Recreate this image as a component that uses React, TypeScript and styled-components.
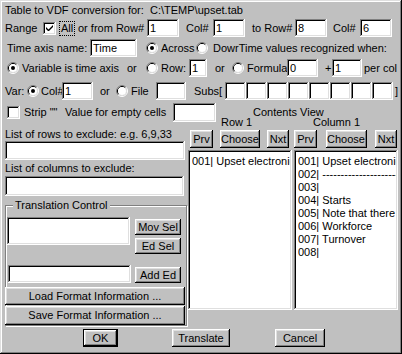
import React from 'react';
import styled, { createGlobalStyle } from 'styled-components';

const GlobalStyle = createGlobalStyle`
  html, body {
    margin: 0;
    padding: 0;
    background: #c0c0c0;
  }
  body {
    font-family: "Liberation Sans", Arial, sans-serif;
    font-size: 11px;
    color: #000;
  }
`;

const sunken = `
  box-shadow: inset -1px -1px #fff, inset 1px 1px #808080, inset -2px -2px #dfdfdf, inset 2px 2px #000;
`;

const raised = `
  box-shadow: inset -1px -1px #000, inset 1px 1px #fff, inset -2px -2px #808080, inset 2px 2px #dfdfdf;
`;

const Dialog = styled.div`
  width: 402px;
  height: 354px;
  box-sizing: border-box;
  padding: 2px 0 0 5px;
  background: #c0c0c0;
  box-shadow: inset -1px -1px #000, inset 1px 1px #dfdfdf, inset -2px -2px #808080, inset 2px 2px #fff;
  overflow: hidden;
`;

const Row = styled.div<{ $mt?: number; $h?: number }>`
  display: flex;
  align-items: center;
  height: ${(p) => p.$h ?? 18}px;
  margin-top: ${(p) => p.$mt ?? 0}px;
  white-space: nowrap;
`;

const Text = styled.span<{ $w?: number; $ml?: number }>`
  flex: none;
  line-height: 13px;
  margin-left: ${(p) => p.$ml ?? 0}px;
  width: ${(p) => (p.$w ? `${p.$w}px` : 'auto')};
  white-space: nowrap;
`;

const Field = styled.div<{ $w: number; $h?: number; $ml?: number }>`
  flex: none;
  box-sizing: border-box;
  display: flex;
  align-items: center;
  width: ${(p) => p.$w}px;
  height: ${(p) => p.$h ?? 18}px;
  margin-left: ${(p) => p.$ml ?? 0}px;
  padding: 0 3px;
  background: #fff;
  line-height: 13px;
  overflow: hidden;
  ${sunken}
`;

const Focus = styled.span`
  flex: none;
  margin-left: 3px;
  width: 16px;
  height: 15px;
  box-sizing: border-box;
  padding-left: 2px;
  line-height: 15px;
  outline: 1px dotted #000;
  outline-offset: -1px;
`;

const Button = styled.button<{ $w: number; $h?: number; $ml?: number; $mt?: number; $default?: boolean }>`
  flex: none;
  box-sizing: border-box;
  display: flex;
  align-items: center;
  justify-content: center;
  width: ${(p) => p.$w}px;
  height: ${(p) => p.$h ?? 16}px;
  margin: ${(p) => p.$mt ?? 0}px 0 0 ${(p) => p.$ml ?? 0}px;
  padding: 0;
  border: ${(p) => (p.$default ? '1px solid #000' : 'none')};
  background: #c0c0c0;
  font: inherit;
  color: #000;
  line-height: 13px;
  ${raised}
`;

const Box = styled.span<{ $ml?: number }>`
  flex: none;
  display: flex;
  width: 13px;
  height: 13px;
  margin-left: ${(p) => p.$ml ?? 0}px;
  background: #fff;
  ${sunken}
`;

const RadioSvg = styled.svg<{ $ml?: number }>`
  flex: none;
  display: block;
  margin-left: ${(p) => p.$ml ?? 0}px;
`;

const Lower = styled.div`
  display: flex;
  align-items: flex-start;
  margin-top: 3px;
`;

const LeftCol = styled.div`
  flex: none;
  width: 183px;
  display: flex;
  flex-direction: column;
`;

const RightCol = styled.div`
  flex: none;
  width: 210px;
  display: flex;
  flex-direction: column;
`;

const Label = styled.div<{ $mt: number }>`
  margin-top: ${(p) => p.$mt}px;
  line-height: 13px;
  white-space: nowrap;
`;

const Group = styled.div`
  margin-top: 9px;
  width: 182px;
  box-sizing: border-box;
  border: 1px solid #808080;
  box-shadow: inset 1px 1px #fff, 1px 1px #fff;
  display: flex;
  flex-direction: column;
`;

const Legend = styled.div`
  align-self: flex-start;
  margin: -7px 0 0 7px;
  padding: 0 2px;
  background: #c0c0c0;
  line-height: 13px;
`;

const GroupRow = styled.div<{ $mt: number }>`
  display: flex;
  align-items: flex-start;
  margin-top: ${(p) => p.$mt}px;
`;

const ButtonStack = styled.div`
  display: flex;
  flex-direction: column;
  margin-left: 5px;
`;

const Header = styled.div<{ $pl: number; $mt?: number }>`
  display: flex;
  line-height: 13px;
  padding-left: ${(p) => p.$pl}px;
  margin-top: ${(p) => p.$mt ?? 0}px;
  white-space: nowrap;
`;

const Nav = styled.div<{ $w: number; $ml: number }>`
  display: flex;
  justify-content: space-between;
  width: ${(p) => p.$w}px;
  margin-left: ${(p) => p.$ml}px;
`;

const Lists = styled.div`
  display: flex;
  gap: 2px;
  margin-top: 2px;
`;

const ListBox = styled.div`
  flex: none;
  width: 104px;
  height: 160px;
  box-sizing: border-box;
  padding: 5px 2px 0 4px;
  background: #fff;
  overflow: hidden;
  ${sunken}
`;

const ListLine = styled.div`
  line-height: 13px;
  height: 13px;
  white-space: nowrap;
  overflow: hidden;
`;

const Radio: React.FC<{ checked?: boolean; ml?: number }> = ({ checked, ml }) => (
  <RadioSvg $ml={ml} width="12" height="12" viewBox="0 0 12 12">
    <path d="M2.11 9.89A5.5 5.5 0 0 1 9.89 2.11" stroke="#808080" fill="none" />
    <path d="M9.89 2.11A5.5 5.5 0 0 1 2.11 9.89" stroke="#fff" fill="none" />
    <path d="M2.82 9.18A4.5 4.5 0 0 1 9.18 2.82" stroke="#000" fill="none" />
    <path d="M9.18 2.82A4.5 4.5 0 0 1 2.82 9.18" stroke="#dfdfdf" fill="none" />
    <circle cx="6" cy="6" r="4" fill="#fff" />
    {checked && <circle cx="6" cy="6" r="2" fill="#000" />}
  </RadioSvg>
);

const Check: React.FC<{ checked?: boolean; ml?: number }> = ({ checked, ml }) => (
  <Box $ml={ml}>
    {checked && (
      <svg width="13" height="13" viewBox="0 0 13 13">
        <path d="M3 5v2l2 2h1l4-4V3L5.5 7.5z" fill="#000" />
      </svg>
    )}
  </Box>
);

const rightLines = [
  '001| Upset electronic',
  '002| ------------------------------------',
  '003|',
  '004| Starts',
  '005| Note that there',
  '006| Workforce',
  '007| Turnover',
  '008|',
];

const App: React.FC = () => {
  return (
    <>
      <GlobalStyle />
      <Dialog>
        <Row $h={16}>
          <Text $w={145}>Table to VDF conversion for:</Text>
          <Text>C:\TEMP\upset.tab</Text>
        </Row>

        <Row $mt={1}>
          <Text $w={38}>Range</Text>
          <Check checked />
          <Focus>All</Focus>
          <Text $ml={3} $w={69}>or from Row#</Text>
          <Field $w={32}>1</Field>
          <Text $ml={7} $w={27}>Col#</Text>
          <Field $w={32}>1</Field>
          <Text $ml={7} $w={43}>to Row#</Text>
          <Field $w={32}>8</Field>
          <Text $ml={6} $w={27}>Col#</Text>
          <Field $w={32}>6</Field>
        </Row>

        <Row $mt={2}>
          <Text $ml={2} $w={83}>Time axis name:</Text>
          <Field $w={47}>Time</Field>
          <Radio ml={9} checked />
          <Text $ml={3} $w={35}>Across</Text>
          <Radio />
          <Text $ml={5}>DowrTime values recognized when:</Text>
        </Row>

        <Row $mt={2}>
          <Radio ml={2} checked />
          <Text $ml={3} $w={105}>Variable is time axis</Text>
          <Text $w={19}>or</Text>
          <Radio />
          <Text $ml={3} $w={28}>Row:</Text>
          <Field $w={18}>1</Field>
          <Text $ml={8} $w={17}>or</Text>
          <Radio />
          <Text $ml={3} $w={40}>Formula</Text>
          <Field $w={31}>0</Field>
          <Text $ml={7} $w={7}>+</Text>
          <Field $w={30}>1</Field>
          <Text $ml={2}>per col</Text>
        </Row>

        <Row $mt={5}>
          <Text $w={21}>Var:</Text>
          <Radio ml={1} checked />
          <Text $ml={2} $w={21}>Col#</Text>
          <Field $w={31}>1</Field>
          <Text $ml={7} $w={16}>or</Text>
          <Radio />
          <Text $ml={3} $w={25}>File</Text>
          <Field $w={30} />
          <Text $ml={8} $w={31}>Subs[</Text>
          {Array.from({ length: 8 }).map((_, i) => (
            <Field key={i} $w={21} />
          ))}
          <Text $ml={2}>]</Text>
        </Row>

        <Lower>
          <LeftCol>
            <Row>
              <Check ml={2} />
              <Text $ml={4} $w={41}>Strip ""</Text>
              <Text $w={108}>Value for empty cells</Text>
              <Field $w={43} $h={19} />
            </Row>
            <Label $mt={7}>List of rows to exclude: e.g. 6,9,33</Label>
            <Field $w={180} $h={19} />
            <Label $mt={2}>List of columns to exclude:</Label>
            <Field $w={179} $h={20} $ml={0} style={{ marginTop: 1 }} />
            <Group>
              <Legend>Translation Control</Legend>
              <GroupRow $mt={5}>
                <Field $w={123} $h={28} $ml={1} />
                <ButtonStack>
                  <Button $w={46} $mt={2}>Mov Sel</Button>
                  <Button $w={46} $mt={3}>Ed Sel</Button>
                </ButtonStack>
              </GroupRow>
              <GroupRow $mt={11}>
                <Field $w={123} $ml={2} />
                <Button $w={46} $ml={4} $mt={2}>Add Ed</Button>
              </GroupRow>
              <Button $w={180} $h={18} $ml={-1} $mt={4}>Load Format Information ...</Button>
              <Button $w={180} $h={19} $ml={-1} $mt={1}>Save Format Information ...</Button>
            </Group>
          </LeftCol>

          <RightCol>
            <Header $pl={65} $mt={3}>Contents View</Header>
            <Header $pl={33} $mt={-3}>
              <Text $w={92}>Row 1</Text>
              <Text>Column 1</Text>
            </Header>
            <Row $mt={1}>
              <Nav $w={99} $ml={2}>
                <Button $w={23} $h={18}>Prv</Button>
                <Button $w={40} $h={18}>Choose</Button>
                <Button $w={22} $h={18}>Nxt</Button>
              </Nav>
              <Nav $w={103} $ml={5}>
                <Button $w={23} $h={18}>Prv</Button>
                <Button $w={41} $h={18}>Choose</Button>
                <Button $w={22} $h={18}>Nxt</Button>
              </Nav>
            </Row>
            <Lists>
              <ListBox>
                <ListLine>001| Upset electronic</ListLine>
              </ListBox>
              <ListBox>
                {rightLines.map((l) => (
                  <ListLine key={l}>{l}</ListLine>
                ))}
              </ListBox>
            </Lists>
          </RightCol>
        </Lower>

        <Row $mt={3}>
          <Button $w={35} $h={18} $ml={78} $default>OK</Button>
          <Button $w={58} $h={18} $ml={54}>Translate</Button>
          <Button $w={50} $h={18} $ml={45}>Cancel</Button>
        </Row>
      </Dialog>
    </>
  );
};

export default App;
